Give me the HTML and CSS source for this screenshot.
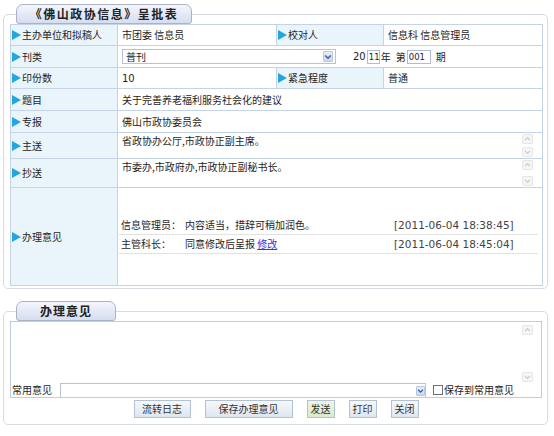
FILE: index.html
```html
<!DOCTYPE html>
<html lang="zh-CN">
<head>
<meta charset="utf-8">
<title>《佛山政协信息》呈批表</title>
<link rel="stylesheet" href="styles.css">
</head>
<body>
<fieldset class="panel panel-main">
  <legend class="tab tab-main"><span class="tab-text">《佛山政协信息》呈批表</span></legend>
  <table class="form">
    <colgroup><col class="c-label"><col class="c-value"><col class="c-label"><col class="c-value"></colgroup>
    <tr class="h21">
      <th><span class="arr"></span>主办单位和拟稿人</th>
      <td>市团委 信息员</td>
      <th><span class="arr"></span>校对人</th>
      <td>信息科 信息管理员</td>
    </tr>
    <tr class="h22">
      <th><span class="arr"></span>刊类</th>
      <td colspan="3">
        <div class="issue">
          <div class="select sel-kind">
            <span class="sel-text">普刊</span>
            <span class="sel-btn"><svg width="8" height="6" viewBox="0 0 8 6"><path d="M1.2 1.5 L4 4.3 L6.8 1.5" fill="none" stroke="#3e5f98" stroke-width="1.5"/></svg></span>
          </div>
          <span class="num">20</span><span class="mini w12">11</span><span class="cn">年</span><span class="cn gap">第</span><span class="mini w24">001</span><span class="cn gap">期</span>
        </div>
      </td>
    </tr>
    <tr class="h21">
      <th><span class="arr"></span>印份数</th>
      <td><span class="num">10</span></td>
      <th><span class="arr"></span>紧急程度</th>
      <td>普通</td>
    </tr>
    <tr class="h22">
      <th><span class="arr"></span>题目</th>
      <td colspan="3">关于完善养老福利服务社会化的建议</td>
    </tr>
    <tr class="h22">
      <th><span class="arr"></span>专报</th>
      <td colspan="3">佛山市政协委员会</td>
    </tr>
    <tr class="h26">
      <th><span class="arr"></span>主送</th>
      <td colspan="3" class="area-cell">
        <div class="area">
          <div class="area-text">省政协办公厅,市政协正副主席。</div>
          <div class="scroll">
            <span class="sb"><svg width="9" height="8" viewBox="0 0 9 8"><path d="M2 5.2 L4.5 2.7 L7 5.2" fill="none" stroke="#c9c9c9" stroke-width="1.2"/></svg></span>
            <span class="sb"><svg width="9" height="8" viewBox="0 0 9 8"><path d="M2 2.8 L4.5 5.3 L7 2.8" fill="none" stroke="#c9c9c9" stroke-width="1.2"/></svg></span>
          </div>
        </div>
      </td>
    </tr>
    <tr class="h29">
      <th><span class="arr"></span>抄送</th>
      <td colspan="3" class="area-cell">
        <div class="area">
          <div class="area-text">市委办,市政府办,市政协正副秘书长。</div>
          <div class="scroll">
            <span class="sb"><svg width="9" height="8" viewBox="0 0 9 8"><path d="M2 5.2 L4.5 2.7 L7 5.2" fill="none" stroke="#c9c9c9" stroke-width="1.2"/></svg></span>
            <span class="sb"><svg width="9" height="8" viewBox="0 0 9 8"><path d="M2 2.8 L4.5 5.3 L7 2.8" fill="none" stroke="#c9c9c9" stroke-width="1.2"/></svg></span>
          </div>
        </div>
      </td>
    </tr>
    <tr class="h98">
      <th><span class="arr"></span>办理意见</th>
      <td colspan="3" class="log-cell">
        <table class="log">
          <tr>
            <td class="who">信息管理员：</td>
            <td class="what">内容适当，措辞可稍加润色。</td>
            <td class="when">[2011-06-04 18:38:45]</td>
          </tr>
          <tr>
            <td class="who">主管科长：</td>
            <td class="what">同意修改后呈报 <a href="#" class="link">修改</a></td>
            <td class="when">[2011-06-04 18:45:04]</td>
          </tr>
        </table>
      </td>
    </tr>
  </table>
</fieldset>

<fieldset class="panel panel-op">
  <legend class="tab tab-op"><span class="tab-text">办理意见</span></legend>
  <div class="op-box">
    <div class="op-text">
      <div class="op-area"></div>
      <div class="scroll op-scroll">
        <span class="sb"><svg width="9" height="8" viewBox="0 0 9 8"><path d="M2 5.2 L4.5 2.7 L7 5.2" fill="none" stroke="#c9c9c9" stroke-width="1.2"/></svg></span>
        <span class="sb"><svg width="9" height="8" viewBox="0 0 9 8"><path d="M2 2.8 L4.5 5.3 L7 2.8" fill="none" stroke="#c9c9c9" stroke-width="1.2"/></svg></span>
      </div>
    </div>
    <div class="op-row">
      <span class="op-label">常用意见</span>
      <div class="select sel-common">
        <span class="sel-text"></span>
        <span class="sel-btn"><svg width="8" height="6" viewBox="0 0 8 6"><path d="M1.2 1.5 L4 4.3 L6.8 1.5" fill="none" stroke="#3e5f98" stroke-width="1.5"/></svg></span>
      </div>
      <label class="chk"><span class="box"></span>保存到常用意见</label>
    </div>
  </div>
  <div class="btns">
    <button class="btn b-log" type="button">流转日志</button>
    <button class="btn b-save" type="button">保存办理意见</button>
    <button class="btn b-send" type="button">发送</button>
    <button class="btn b-small" type="button">打印</button>
    <button class="btn b-small" type="button">关闭</button>
  </div>
</fieldset>
</body>
</html>
```

FILE: styles.css
```css
* { box-sizing: border-box; }

body {
  margin: 0;
  background: #ffffff;
  color: #1e1e1e;
  font-family: "Noto Sans CJK SC", "Noto Sans", "DejaVu Sans", sans-serif;
  font-size: 10px;
  line-height: 12px;
}

.panel {
  margin: 4px 6px 0 3px;
  padding: 0 5px 2px 6px;
  border: 1px solid #d6dae1;
  border-radius: 5px;
  min-width: 0;
}

.panel-op {
  margin-top: 12px;
  padding-bottom: 6px;
}

.tab {
  margin: 0 0 0 6px;
  padding: 0;
  height: 20px;
  border: 1px solid #a9b2c6;
  border-radius: 7px 7px 3px 3px;
  background: linear-gradient(#f4f6fc, #d6ddef);
  color: #222;
  text-align: left;
}

.tab-text {
  display: block;
  font-size: 12px;
  font-weight: bold;
  letter-spacing: 1.5px;
  line-height: 18px;
  text-align: center;
}

.tab-op .tab-text { letter-spacing: 1px; }

.tab-main { width: 176px; }
.tab-op { width: 100px; }

/* main form table */
.form {
  width: 100%;
  border-collapse: collapse;
  table-layout: fixed;
}

.c-label { width: 107px; }
.c-value { width: 159px; }

.form > tbody > tr > th,
.form > tbody > tr > td {
  border: 1px solid #c4d3e6;
  padding: 0 4px;
  vertical-align: middle;
  text-align: left;
  font-weight: normal;
  white-space: nowrap;
}

.form > tbody > tr > th {
  background: #eaf4fb;
  padding-left: 1px;
}

.h21 { height: 21px; }
.h22 { height: 22px; }
.h26 { height: 26px; }
.h29 { height: 29px; }
.h98 { height: 98px; }

.arr {
  display: inline-block;
  width: 0;
  height: 0;
  margin-right: 1px;
  vertical-align: -1px;
  border-left: 9px solid #22a6dd;
  border-top: 5px solid transparent;
  border-bottom: 5px solid transparent;
}

.num {
  font-family: "DejaVu Sans", Verdana, sans-serif;
  font-size: 10px;
}

/* issue row */
.issue {
  display: flex;
  align-items: center;
}

.select {
  display: flex;
  align-items: center;
  justify-content: space-between;
  border: 1px solid #b5c3d6;
  background: #fff;
}

.sel-kind {
  width: 214px;
  height: 15px;
  margin-right: 17px;
  padding: 0 2px 0 3px;
}

.sel-btn {
  display: flex;
  align-items: center;
  justify-content: center;
  width: 10px;
  height: 11px;
  border: 1px solid #b7c8e4;
  border-radius: 1px;
  background: linear-gradient(#e6eef9, #cbd9ef);
}

.mini {
  display: inline-block;
  height: 14px;
  margin-left: 1px;
  padding-left: 1px;
  border: 1px solid #aebdd4;
  font-family: "DejaVu Sans", Verdana, sans-serif;
  font-size: 8.5px;
  line-height: 12px;
}

.w12 { width: 13px; }
.w24 { width: 24px; }

.cn { margin-left: 1px; }
.cn.gap { margin-left: 5px; }

/* textareas */
.area-cell { padding-right: 9px !important; }

.area {
  display: flex;
  height: 100%;
}

.area-text {
  flex: 1;
  padding-top: 2px;
}

.scroll {
  display: flex;
  flex-direction: column;
  justify-content: space-between;
  width: 11px;
  padding: 1px 0;
}

.h26 .area { height: 25px; }
.h29 .area { height: 28px; }

.sb {
  display: flex;
  align-items: center;
  justify-content: center;
  width: 11px;
  height: 10px;
  border: 1px solid #e6e6e6;
  border-radius: 2px;
  background: #f6f6f6;
}

/* log */
.log-cell { padding: 0 4px 0 1px !important; }

.log {
  width: 100%;
  border-collapse: collapse;
  margin-top: -4px;
}

.log td {
  height: 19px;
  padding: 0;
  border-bottom: 1px solid #e2e2e2;
  vertical-align: middle;
}

.who { width: 66px; padding-left: 2px !important; }
.what { width: 209px; }

.when {
  color: #444;
  font-family: "DejaVu Sans", Verdana, sans-serif;
  font-size: 10.5px;
}

.link {
  color: #3434e6;
  text-decoration: underline;
}

/* opinion panel */
.op-box {
  border: 1px solid #bfcde0;
  margin-top: 0;
}

.op-text {
  display: flex;
  height: 61px;
  padding: 3px 8px 0 0;
}

.op-area { flex: 1; }

.op-scroll { height: 57px; padding: 0; }

.op-row {
  display: flex;
  align-items: stretch;
  height: 14px;
  padding-left: 1px;
}

.op-label {
  width: 48px;
  line-height: 14px;
}

.sel-common {
  width: 366px;
  border-bottom: 0;
  padding: 2px 0 0 0;
  align-items: flex-start;
  justify-content: flex-end;
}

.sel-common .sel-btn { width: 9px; height: 10px; }

.chk {
  display: flex;
  align-items: center;
  margin-left: 7px;
}

.box {
  display: inline-block;
  width: 10px;
  height: 10px;
  margin-right: 1px;
  border: 1px solid #707070;
  background: #fff;
}

.btns {
  display: flex;
  justify-content: center;
  gap: 14px;
  margin-top: 2px;
}

.btn {
  height: 18px;
  padding: 0;
  border: 1px solid #b3c1d4;
  background: linear-gradient(#f6f8fc, #dde6f1);
  color: #333;
  font-family: "Noto Sans CJK SC", "Noto Sans", sans-serif;
  font-size: 10px;
  line-height: 14px;
}

.b-log { width: 57px; }
.b-save { width: 88px; }
.b-send { width: 28px; background: linear-gradient(#eef5e4, #dbeacb); }
.b-small { width: 28px; }
```
